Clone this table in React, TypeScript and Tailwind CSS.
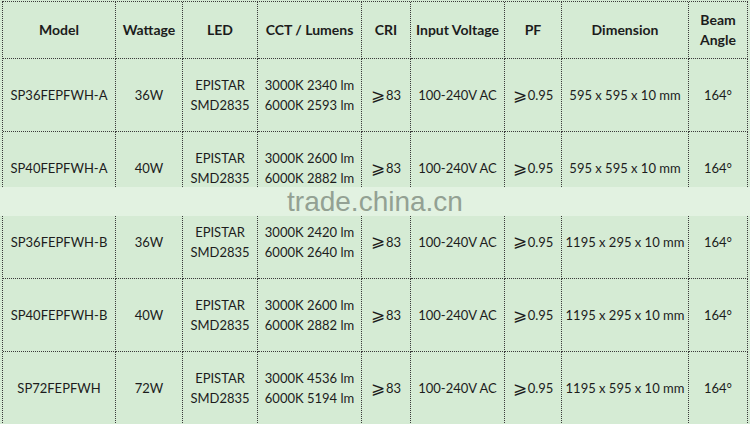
import React from "react";

const GE = "⩾";

type Row = {
  model: string;
  watt: string;
  cct: [string, string];
  dim: string;
};

const rows: Row[] = [
  { model: "SP36FEPFWH-A", watt: "36W", cct: ["3000K 2340 lm", "6000K 2593 lm"], dim: "595 x 595 x 10 mm" },
  { model: "SP40FEPFWH-A", watt: "40W", cct: ["3000K 2600 lm", "6000K 2882 lm"], dim: "595 x 595 x 10 mm" },
  { model: "SP36FEPFWH-B", watt: "36W", cct: ["3000K 2420 lm", "6000K 2640 lm"], dim: "1195 x 295 x 10 mm" },
  { model: "SP40FEPFWH-B", watt: "40W", cct: ["3000K 2600 lm", "6000K 2882 lm"], dim: "1195 x 295 x 10 mm" },
  { model: "SP72FEPFWH", watt: "72W", cct: ["3000K 4536 lm", "6000K 5194 lm"], dim: "1195 x 595 x 10 mm" },
];

const cell =
  "flex flex-col items-center justify-center text-center border-r border-b border-dotted border-[#3a3a3a] leading-[20px] whitespace-nowrap";

const headers: React.ReactNode[] = [
  "Model",
  "Wattage",
  "LED",
  "CCT / Lumens",
  "CRI",
  "Input Voltage",
  "PF",
  "Dimension",
  <>
    <span>Beam</span>
    <span>Angle</span>
  </>,
];

function Ge() {
  return (
    <span
      style={{ fontFamily: "'DejaVu Sans', sans-serif" }}
      className="text-[17px] leading-none font-light mr-[1px]"
    >
      {GE}
    </span>
  );
}

export default function App() {
  return (
    <div
      className="relative w-[750px] h-[424px] overflow-hidden bg-[#d5ebd4] text-[#1c1c1c]"
      style={{ fontFamily: "Lato, 'Open Sans', 'DejaVu Sans', sans-serif" }}
    >
      <div className="ml-[2px] mt-[1px] grid grid-cols-[113px_67px_75px_104px_49px_94px_57px_127px_59px] grid-rows-[57px_73px_73px_74px_73px_73px] border-l border-t border-dotted border-[#3a3a3a] w-max">
        {headers.map((h, i) => (
          <div key={i} className={`${cell} font-bold text-[14px]`}>
            {h}
          </div>
        ))}
        {rows.map((r) => (
          <React.Fragment key={r.model}>
            <div className={`${cell} text-[13px]`}>{r.model}</div>
            <div className={`${cell} text-[13px]`}>{r.watt}</div>
            <div className={`${cell} text-[13px]`}>
              <span>EPISTAR</span>
              <span>SMD2835</span>
            </div>
            <div className={`${cell} text-[13px]`}>
              <span>{r.cct[0]}</span>
              <span>{r.cct[1]}</span>
            </div>
            <div className={`${cell} text-[13px]`}>
              <span className="flex items-center">
                <Ge />83
              </span>
            </div>
            <div className={`${cell} text-[13px]`}>100-240V AC</div>
            <div className={`${cell} text-[13px]`}>
              <span className="flex items-center">
                <Ge />0.95
              </span>
            </div>
            <div className={`${cell} text-[13px]`}>{r.dim}</div>
            <div className={`${cell} text-[13px]`}>164°</div>
          </React.Fragment>
        ))}
      </div>
      <div className="absolute left-0 right-0 top-[187px] h-[29px] bg-[#e2f2e1] flex items-center justify-center">
        <span
          className="text-[28px] leading-none text-[#93a193]"
          style={{ fontFamily: "'Liberation Sans', Arial, sans-serif" }}
        >
          trade.china.cn
        </span>
      </div>
    </div>
  );
}
